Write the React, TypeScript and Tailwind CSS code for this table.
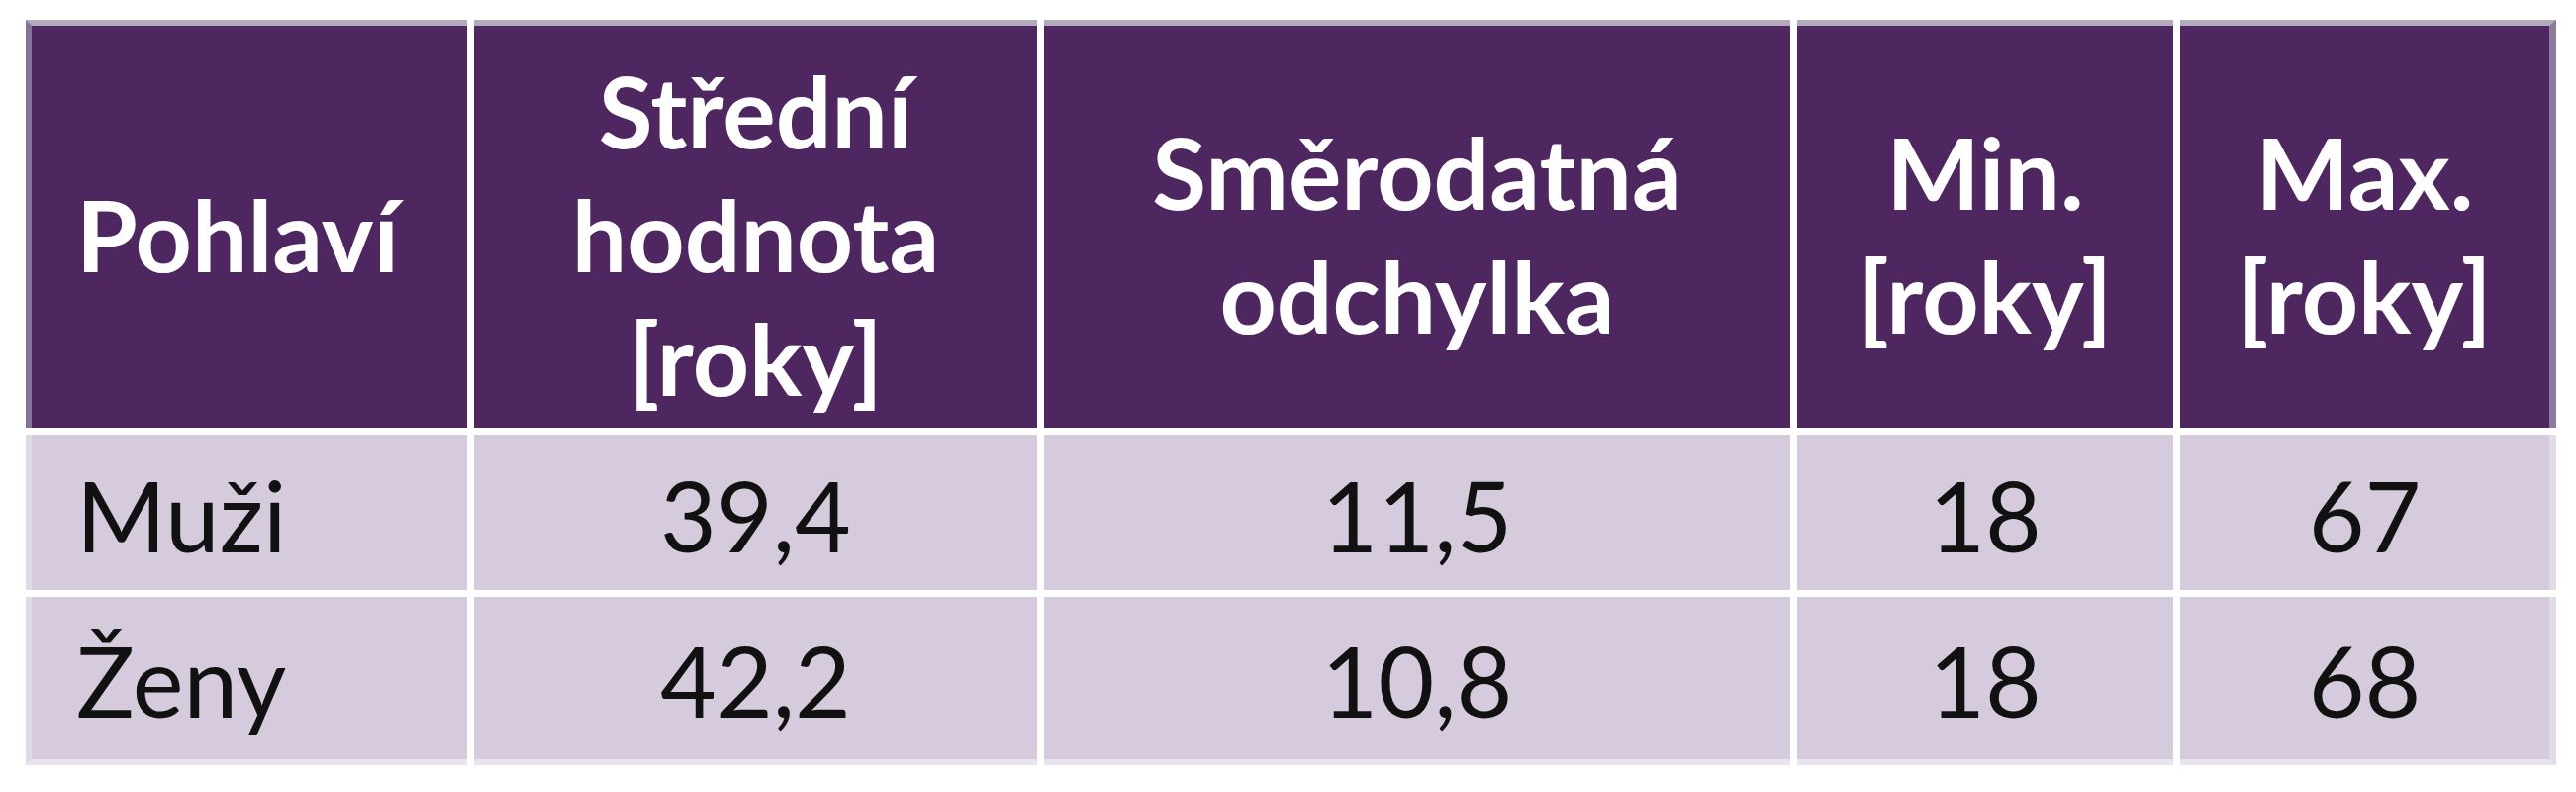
import clsx from 'clsx';

type Row = { label: string; values: string[] };

const headers: string[][] = [
  ['Pohlaví'],
  ['Střední', 'hodnota', '[roky]'],
  ['Směrodatná', 'odchylka'],
  ['Min.', '[roky]'],
  ['Max.', '[roky]'],
];

const rows: Row[] = [
  { label: 'Muži', values: ['39,4', '11,5', '18', '67'] },
  { label: 'Ženy', values: ['42,2', '10,8', '18', '68'] },
];

const font = { fontFamily: 'Lato, "Open Sans", "Noto Sans", sans-serif' };

export default function App() {
  return (
    <div className="h-[800px] w-full bg-white pt-[20px] pl-[26px]" style={font}>
      <div className="grid w-[2557px] grid-cols-[446px_569px_754px_380px_380px] grid-rows-[412px_157px_170px] gap-[7px]">
        {headers.map((lines, i) => (
          <div
            key={`h${i}`}
            className={clsx(
              'flex flex-col justify-center border-t-[6px] border-t-[#b3aabd] bg-[#4e2660] pt-[14px] text-[100px] font-bold leading-[125px] text-white',
              i === 0 ? 'items-start border-l-[6px] border-l-[#86739a] pl-[45px]' : 'items-center',
              i === headers.length - 1 && 'border-r-[7px] border-r-[#8d7b9b]',
            )}
          >
            {lines.map((l) => (
              <span key={l}>{l}</span>
            ))}
          </div>
        ))}
        {rows.map((row, r) => {
          const last = r === rows.length - 1;
          const cells = [row.label, ...row.values];
          return cells.map((c, i) => (
            <div
              key={`r${r}c${i}`}
              className={clsx(
                'flex items-center bg-[#d5cbdd] pt-[4px] text-[98px] font-normal leading-none text-[#111]',
                i === 0 ? 'justify-start border-l-[6px] border-l-[#e0d9e6] pl-[45px]' : 'justify-center',
                i === cells.length - 1 && 'border-r-[7px] border-r-[#e2dbe7]',
                last && 'border-b-[6px] border-b-[#e9e4ee]',
              )}
            >
              {c}
            </div>
          ));
        })}
      </div>
    </div>
  );
}
